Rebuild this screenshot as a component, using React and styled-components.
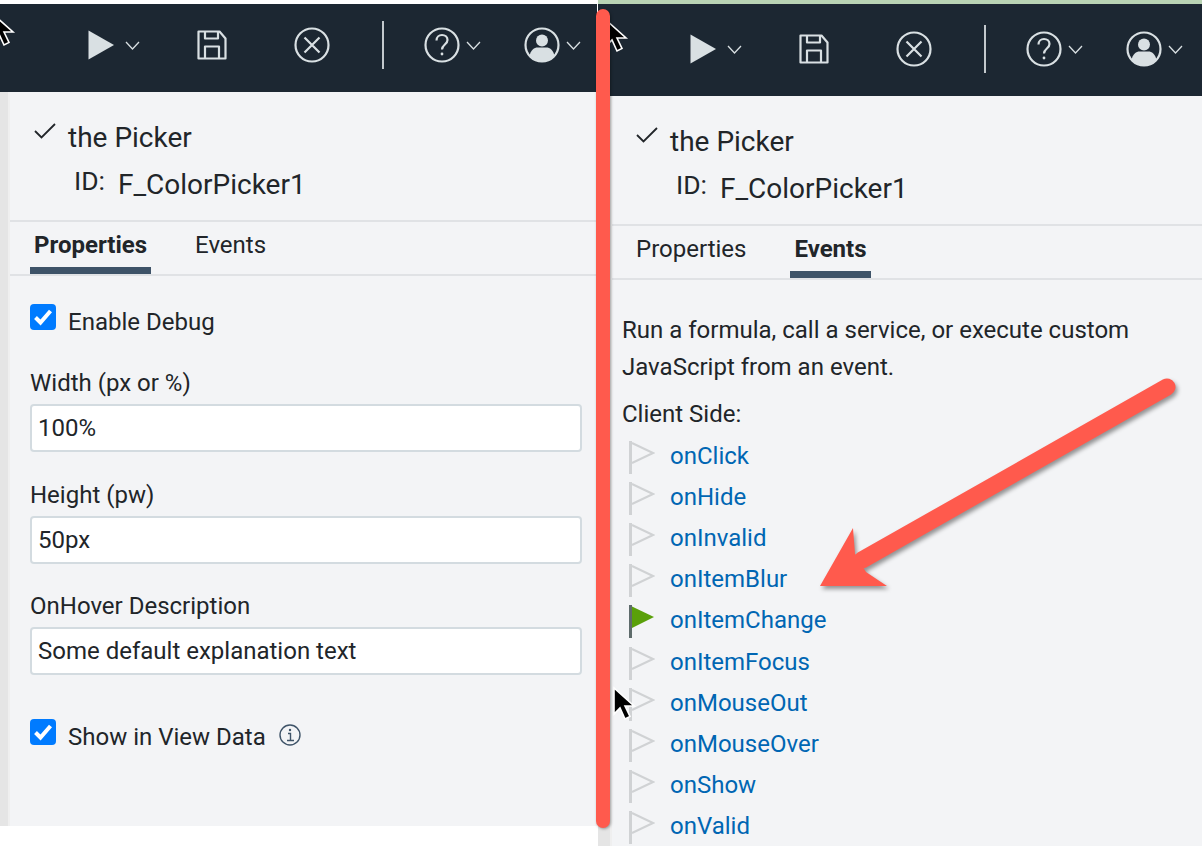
import React from "react";
import styled, { createGlobalStyle } from "styled-components";

const GlobalStyle = createGlobalStyle`
  html, body {
    margin: 0;
    background: #fff;
    overflow: hidden;
  }
  * {
    box-sizing: border-box;
  }
`;

const Page = styled.div`
  position: relative;
  display: flex;
  width: 1202px;
  height: 846px;
  overflow: hidden;
  font-family: Roboto, "Liberation Sans", sans-serif;
  color: #212529;
`;

const Pane = styled.section`
  display: flex;
  flex-direction: column;
  flex: none;
  width: ${(p) => p.$width}px;
  height: ${(p) => p.$height}px;
  margin-left: ${(p) => p.$offset || 0}px;
  padding-top: 4px;
  background: ${(p) => p.$strip || "#fff"};
  overflow: hidden;
`;

const Toolbar = styled.div`
  display: flex;
  align-items: center;
  flex: none;
  height: ${(p) => p.$height}px;
  padding-left: ${(p) => p.$inset}px;
  padding-bottom: ${(p) => p.$lift}px;
  background: #1c2732;
`;

const ToolItem = styled.div`
  display: flex;
  align-items: center;
  gap: ${(p) => p.$gap || 6}px;
  margin-left: ${(p) => p.$space || 0}px;
  color: #d9e0e3;
`;

const ToolDivider = styled.div`
  width: 2px;
  height: 48px;
  margin-left: 52px;
  background: #c3c9cd;
`;

const Body = styled.div`
  display: flex;
  flex: 1;
  min-height: 0;
  background: #f3f4f6;
`;

const Gutter = styled.div`
  flex: none;
  width: ${(p) => p.$width}px;
  border-right: 2px solid #efefef;
  background: #e5e5e5;
`;

const Content = styled.div`
  flex: 1;
  min-width: 0;
`;

const Header = styled.header`
  padding: 29px 0 19px 24px;
  border-bottom: 2px solid #e0e2e5;
`;

const TitleRow = styled.div`
  display: flex;
  align-items: center;
  gap: 12px;
  height: 32px;
  font-size: 28px;
`;

const TitleCheck = styled.svg`
  width: 22px;
  height: 16px;
  margin-top: -12px;
  fill: none;
  stroke: #212529;
  stroke-width: 1.8;
`;

const IdRow = styled.div`
  display: flex;
  align-items: center;
  height: 34px;
  margin-top: 14px;
  padding-left: 40px;
  font-size: 28px;
`;

const IdLabel = styled.span`
  width: 44px;
  margin-top: -7px;
  font-size: 26.5px;
`;

const Tabs = styled.nav`
  display: flex;
  gap: 40px;
  height: 54px;
  padding-left: 20px;
  border-bottom: 2px solid #e0e2e5;
`;

const Tab = styled.div`
  height: 52px;
  padding: 7px 4px 0;
  font-size: 24px;
  line-height: 32px;
  font-weight: ${(p) => (p.$active ? 700 : 400)};
  border-bottom: 7px solid ${(p) => (p.$active ? "#3e5368" : "transparent")};
`;

const Form = styled.div`
  display: flex;
  flex-direction: column;
  gap: 28.5px;
  padding: 28px 15px 0 20px;
`;

const CheckRow = styled.label`
  display: flex;
  align-items: center;
  height: 26px;
  gap: 12px;
  margin-top: ${(p) => p.$before || 0}px;
  margin-bottom: ${(p) => p.$after || 0}px;
  font-size: 24px;
`;

const CheckText = styled.span`
  padding-top: 9px;
`;

const CheckBox = styled.span`
  display: flex;
  align-items: center;
  justify-content: center;
  flex: none;
  width: 26px;
  height: 26px;
  border-radius: 4px;
  background: #007bff;
`;

const CheckMark = styled.svg`
  width: 20px;
  height: 18px;
  fill: none;
  stroke: #fff;
  stroke-width: 4;
`;

const InfoIcon = styled.svg`
  width: 22px;
  height: 22px;
  margin: 5px 0 0 1px;
  fill: none;
  stroke: #3e5368;
  stroke-width: 1.4;
`;

const Field = styled.div`
  display: flex;
  flex-direction: column;
  gap: 7px;
`;

const FieldLabel = styled.label`
  font-size: 24px;
  line-height: 28px;
`;

const TextInput = styled.input`
  width: 100%;
  height: 48px;
  padding: 0 6px;
  border: 2px solid #d3dbe0;
  border-radius: 4px;
  outline: none;
  background: #fff;
  color: #212529;
  font-family: inherit;
  font-size: 24px;
`;

const EventsBody = styled.div`
  padding: 32px 0 0 10px;
  font-size: 24px;
  line-height: 37px;
`;

const Intro = styled.p`
  margin: 0 0 10px;
`;

const EventList = styled.ul`
  margin: 3px 0 0;
  padding: 0 0 0 7px;
  list-style: none;
`;

const EventRow = styled.li`
  display: flex;
  align-items: center;
  gap: 15px;
  height: 41.1px;
  color: #0066b3;
`;

const FlagIcon = styled.svg`
  flex: none;
  width: 26px;
  height: 33px;
  margin-top: 2px;
`;

const BarAnnotation = styled.div`
  position: absolute;
  top: 9px;
  left: 596px;
  width: 14px;
  height: 819px;
  border-radius: 7px;
  background: #ff5a4d;
  box-shadow: 1px 1px 3px rgba(0, 0, 0, 0.35);
`;

const ArrowAnnotation = styled.svg`
  position: absolute;
  top: 370px;
  left: 810px;
  width: 375px;
  height: 230px;
  overflow: visible;
  filter: drop-shadow(2px 3px 2px rgba(0, 0, 0, 0.4));
`;

const Cursor = styled.svg`
  position: absolute;
  top: ${(p) => p.$y}px;
  left: ${(p) => p.$x}px;
  width: 22px;
  height: 33px;
  overflow: visible;
`;

const Chevron = () => (
  <svg width="15" height="9" viewBox="0 0 15 9" fill="none" stroke="currentColor" strokeWidth="1.3">
    <path d="M1 1l6.500 7L14 1" />
  </svg>
);

const PlayIcon = () => (
  <svg width="26" height="30" viewBox="0 0 26 30" fill="currentColor">
    <path d="M0.500 0.500 26 15 0.500 29.500z" />
  </svg>
);

const SaveIcon = () => (
  <svg width="30" height="30" viewBox="0 0 30 30" fill="none" stroke="currentColor" strokeWidth="2.2" strokeLinejoin="round">
    <path d="M1.500 1.500h21l6 7v20h-27z" />
    <path d="M8 1.500v7h13v-7" />
    <path d="M8 28.500v-12h14v12" />
  </svg>
);

const CloseIcon = () => (
  <svg width="36" height="36" viewBox="0 0 36 36" fill="none" stroke="currentColor" strokeWidth="2.2">
    <circle cx="18" cy="18" r="16.500" />
    <path d="M10.500 10.500l15 15M25.500 10.500l-15 15" />
  </svg>
);

const HelpIcon = () => (
  <svg width="36" height="36" viewBox="0 0 36 36" fill="none" stroke="currentColor" strokeWidth="2.2">
    <circle cx="18" cy="18" r="16.500" />
    <path d="M12.500 13.500c0-3.500 2.500-5.500 5.500-5.500s5.500 2 5.500 5c0 4.500-5.500 4.500-5.500 9.500" />
    <circle cx="18" cy="27" r="1.400" fill="currentColor" stroke="none" />
  </svg>
);

const UserIcon = () => (
  <svg width="36" height="36" viewBox="0 0 36 36" fill="none" stroke="currentColor" strokeWidth="2.2">
    <circle cx="18" cy="18" r="16.500" />
    <circle cx="18" cy="13.500" r="6" fill="currentColor" stroke="none" />
    <path d="M5.500 29c1-6 5-8.500 8-8.500h9c3 0 7 2.500 8 8.500-3 3.500-8 5.500-12.500 5.500S8.500 32.500 5.500 29z" fill="currentColor" stroke="none" />
  </svg>
);

const Flag = ({ on }) => (
  <FlagIcon viewBox="0 0 26 33">
    <path d="M1.500 0v33" stroke={on ? "#5e6b6b" : "#d0d2d4"} strokeWidth="3" />
    {on ? (
      <path d="M3 1.500 25 12 3 23z" fill="#5aa00a" />
    ) : (
      <path d="M3 2 24 12 3 22" fill="none" stroke="#d0d2d4" strokeWidth="2" />
    )}
  </FlagIcon>
);

const Tools = ({ height, lift, inset }) => (
  <Toolbar $height={height} $lift={lift} $inset={inset}>
    <ToolItem $gap={11}>
      <PlayIcon />
      <Chevron />
    </ToolItem>
    <ToolItem $space={57}>
      <SaveIcon />
    </ToolItem>
    <ToolItem $space={67}>
      <CloseIcon />
    </ToolItem>
    <ToolDivider />
    <ToolItem $space={40}>
      <HelpIcon />
      <Chevron />
    </ToolItem>
    <ToolItem $space={43}>
      <UserIcon />
      <Chevron />
    </ToolItem>
  </Toolbar>
);

const PickerHeader = () => (
  <Header>
    <TitleRow>
      <TitleCheck viewBox="0 0 22 16">
        <path d="M1 8l6.500 6.500L21 1" />
      </TitleCheck>
      the Picker
    </TitleRow>
    <IdRow>
      <IdLabel>ID:</IdLabel>
      F_ColorPicker1
    </IdRow>
  </Header>
);

const Check = () => (
  <CheckBox>
    <CheckMark viewBox="0 0 20 18">
      <path d="M2.500 9.500l5 5L17.500 3" />
    </CheckMark>
  </CheckBox>
);

const ArrowCursor = ({ x, y, fill = "#000" }) => (
  <Cursor $x={x} $y={y} viewBox="0 0 22 33">
    <path
      d="M1 1v26l6-6 5 11 5-2.500-5-10.500h9z"
      fill={fill}
      stroke="#fff"
      strokeWidth="1.600"
    />
  </Cursor>
);

const events = [
  "onClick",
  "onHide",
  "onInvalid",
  "onItemBlur",
  "onItemChange",
  "onItemFocus",
  "onMouseOut",
  "onMouseOver",
  "onShow",
  "onValid",
];

const fields = [
  { label: "Width (px or %)", value: "100%" },
  { label: "Height (pw)", value: "50px" },
  { label: "OnHover Description", value: "Some default explanation text" },
];

export default function App() {
  return (
    <Page>
      <GlobalStyle />
      <Pane $width={597} $height={826}>
        <Tools height={88} lift={6} inset={88} />
        <Body>
          <Gutter $width={10} />
          <Content>
            <PickerHeader />
            <Tabs>
              <Tab $active>Properties</Tab>
              <Tab>Events</Tab>
            </Tabs>
            <Form>
              <CheckRow $after={10.5}>
                <Check />
                <CheckText>Enable Debug</CheckText>
              </CheckRow>
              {fields.map((field) => (
                <Field key={field.label}>
                  <FieldLabel>{field.label}</FieldLabel>
                  <TextInput readOnly value={field.value} />
                </Field>
              ))}
              <CheckRow $before={15.5}>
                <Check />
                <CheckText>Show in View Data</CheckText>
                <InfoIcon viewBox="0 0 22 22">
                  <circle cx="11" cy="11" r="10" />
                  <path d="M9 9.500h2.500v7M8 16.500h7" />
                  <circle cx="11" cy="6" r="1.200" fill="#3e5368" stroke="none" />
                </InfoIcon>
              </CheckRow>
            </Form>
          </Content>
        </Body>
      </Pane>

      <Pane $width={604} $height={846} $offset={1} $strip="#b9d3b4">
        <Tools height={92} lift={2} inset={92} />
        <Body>
          <Gutter $width={14} />
          <Content>
            <PickerHeader />
            <Tabs>
              <Tab>Properties</Tab>
              <Tab $active>Events</Tab>
            </Tabs>
            <EventsBody>
              <Intro>
                Run a formula, call a service, or execute custom
                <br />
                JavaScript from an event.
              </Intro>
              Client Side:
              <EventList>
                {events.map((name) => (
                  <EventRow key={name}>
                    <Flag on={name === "onItemChange"} />
                    {name}
                  </EventRow>
                ))}
              </EventList>
            </EventsBody>
          </Content>
        </Body>
      </Pane>

      <ArrowCursor x={-8} y={13} />
      <ArrowCursor x={605} y={19} />
      <ArrowCursor x={613} y={687} />
      <BarAnnotation />
      <ArrowAnnotation viewBox="810 370 375 230">
        <path d="M1167 387 862 560" stroke="#ff5a4d" strokeWidth="17" strokeLinecap="round" fill="none" />
        <path d="M820 586 853 528 855 554 866 572 887 586z" fill="#ff5a4d" />
      </ArrowAnnotation>
    </Page>
  );
}
